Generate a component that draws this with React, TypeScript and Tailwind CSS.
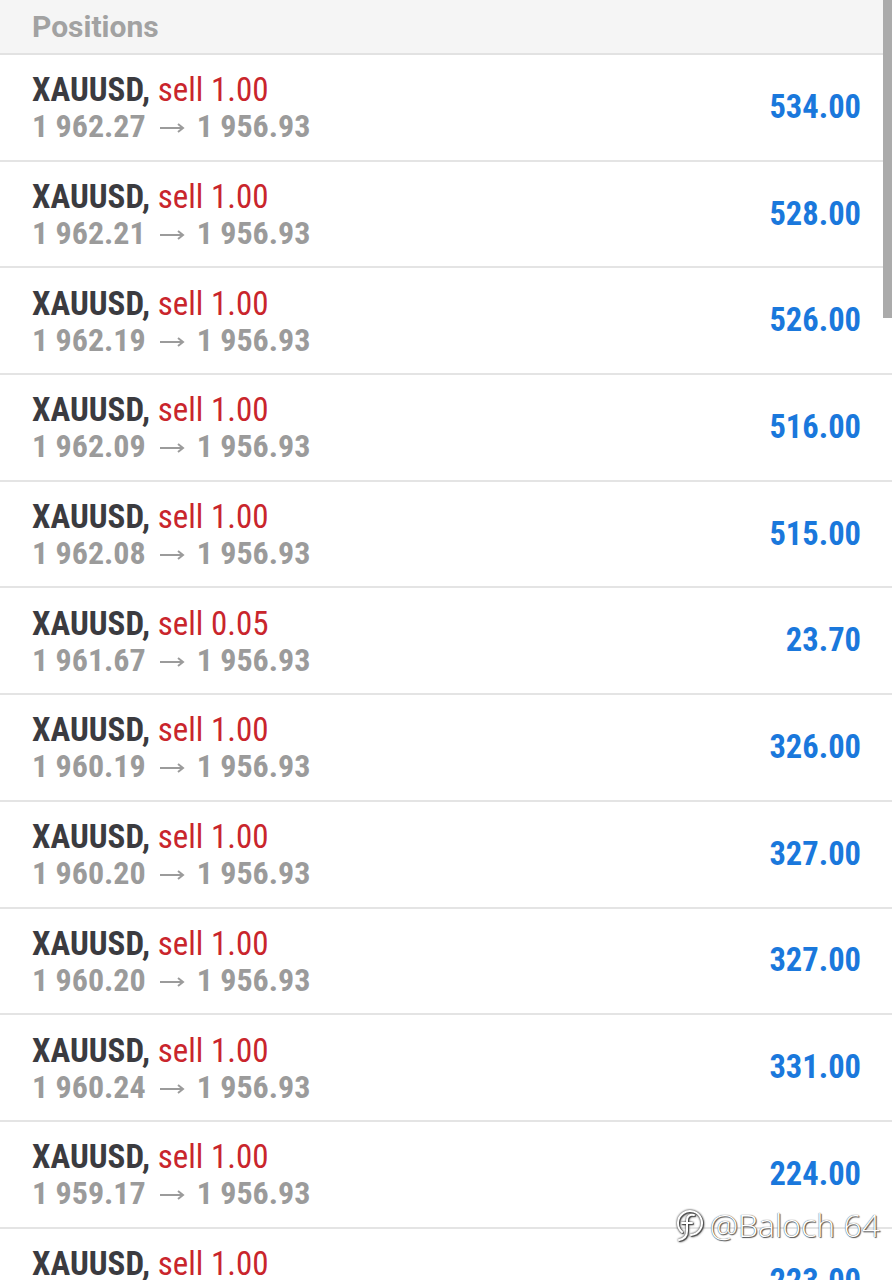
import React from "react";

const rows = [
  { lot: "1.00", open: "1 962.27", profit: "534.00" },
  { lot: "1.00", open: "1 962.21", profit: "528.00" },
  { lot: "1.00", open: "1 962.19", profit: "526.00" },
  { lot: "1.00", open: "1 962.09", profit: "516.00" },
  { lot: "1.00", open: "1 962.08", profit: "515.00" },
  { lot: "0.05", open: "1 961.67", profit: "23.70" },
  { lot: "1.00", open: "1 960.19", profit: "326.00" },
  { lot: "1.00", open: "1 960.20", profit: "327.00" },
  { lot: "1.00", open: "1 960.20", profit: "327.00" },
  { lot: "1.00", open: "1 960.24", profit: "331.00" },
  { lot: "1.00", open: "1 959.17", profit: "224.00" },
  { lot: "1.00", open: "1 959.18", profit: "223.00" },
];

const condensed = {
  fontFamily: '"Roboto Condensed", "Liberation Sans Narrow", "DejaVu Sans Condensed", Roboto, sans-serif',
  fontStretch: "condensed",
};

function Arrow() {
  return (
    <svg width="25" height="10" viewBox="0 0 25 10" className="inline-block ml-[14px] mr-[12px] align-[4px]" fill="none" stroke="#9b9b9b" strokeWidth="2">
      <path d="M0 5 H23 M18 1 L23 5 L18 9" />
    </svg>
  );
}

function PositionRow({ lot, open, profit }: { lot: string; open: string; profit: string }) {
  return (
    <div className="flex items-center justify-between h-[106.7px] border-b-2 border-[#e4e4e4] pl-[32px] pr-[31px] shrink-0" style={condensed}>
      <div className="flex flex-col leading-[37px] pt-[2px]">
        <div className="text-[33px] whitespace-nowrap">
          <span className="font-bold text-[#3b3b40]">XAUUSD,</span>{" "}
          <span className="text-[#c9252c]">sell {lot}</span>
        </div>
        <div className="text-[32px] font-bold text-[#9b9b9b] whitespace-nowrap">
          {open}
          <Arrow />
          1 956.93
        </div>
      </div>
      <div className="font-bold text-[32.5px] text-[#1a78dc]">{profit}</div>
    </div>
  );
}

export default function App() {
  return (
    <div className="relative w-[892px] h-[1280px] overflow-hidden bg-white" style={{ fontFamily: "Roboto, sans-serif" }}>
      <div className="flex flex-col">
        <div className="h-[55px] bg-[#f5f5f5] border-b-2 border-[#e2e2e2] pl-[32px] flex items-center shrink-0">
          <span className="text-[30px] font-bold text-[#a2a2a2]">Positions</span>
        </div>
        {rows.map((r, i) => (
          <PositionRow key={i} {...r} />
        ))}
      </div>

      {/* scrollbar */}
      <div className="absolute right-0 top-0 w-[9px] h-[318px] bg-[#ababab]" />

      {/* watermark */}
      <div
        className="absolute right-[12px] top-[1205px] h-[40px] flex items-center gap-[6px] whitespace-nowrap text-white text-[32px] leading-[40px] font-light [text-shadow:0_0_1px_#222,1px_1px_1px_#555]"
        style={{ fontFamily: '"Open Sans", sans-serif' }}
      >
        <svg width="30" height="34" viewBox="0 0 30 34" fill="none" stroke="#fff" strokeWidth="2" strokeLinecap="round" style={{ filter: "drop-shadow(0 0 1px #222) drop-shadow(1px 1px 0 #666)" }}>
          <path d="M8 24 A12 12 0 1 1 17 27" />
          <path d="M20 7 C16 6 13 8 13 12 L13 23 C13 28 10 31 5 32" />
          <path d="M8 15 H18" />
        </svg>
        <span>@Baloch 64</span>
      </div>
    </div>
  );
}
